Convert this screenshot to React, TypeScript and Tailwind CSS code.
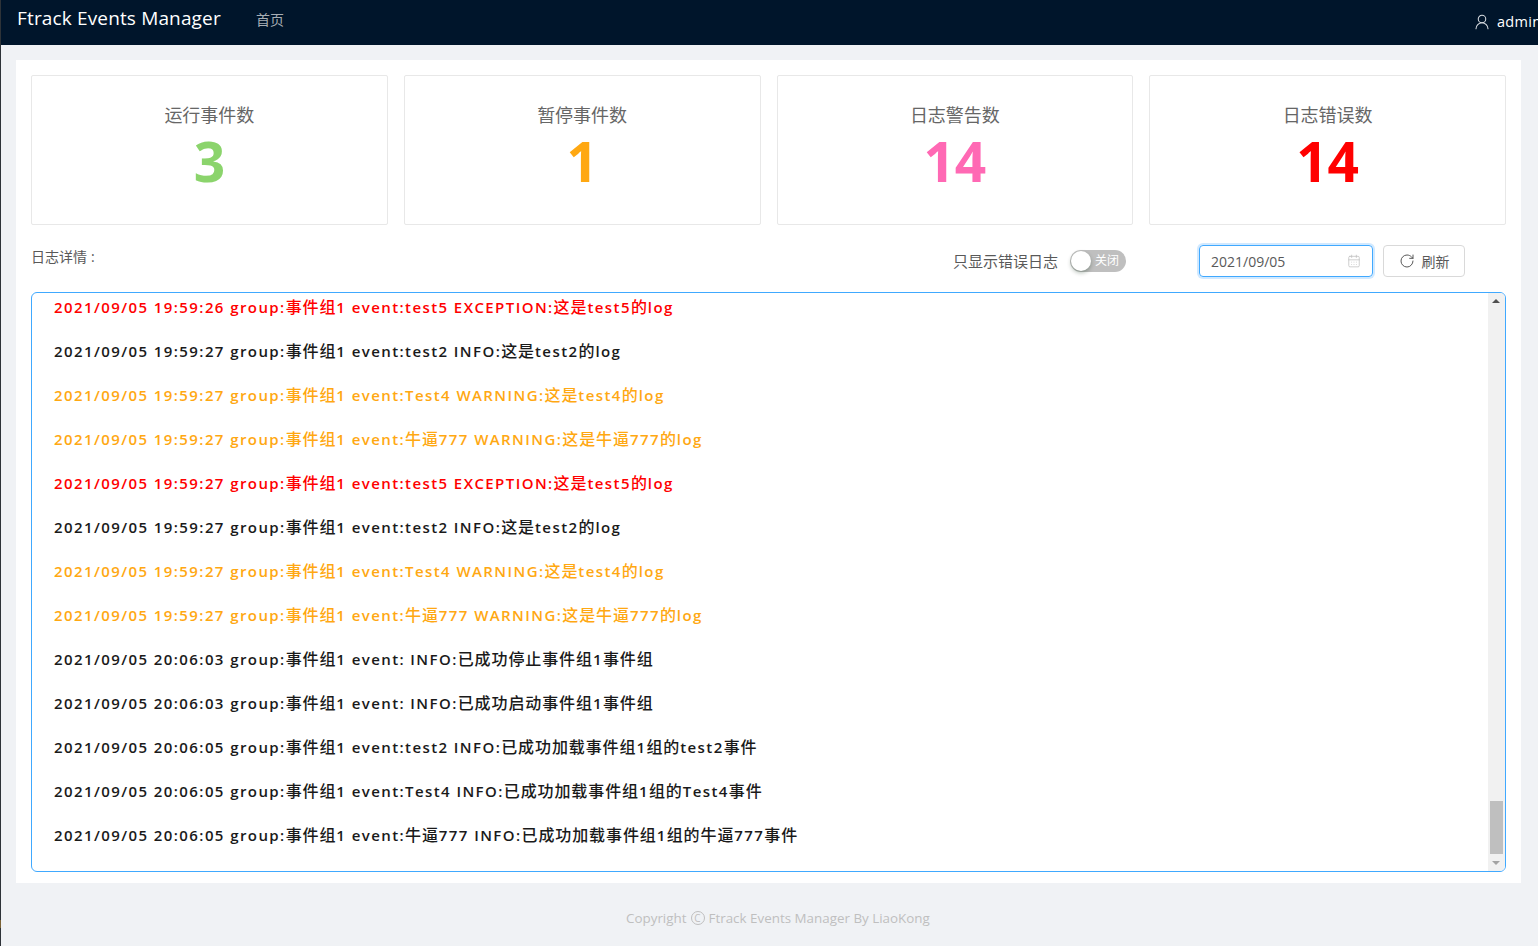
import { CalendarDays, RotateCw, UserRound } from "lucide-react";

const FONT = "font-['Open_Sans','Noto_Sans_CJK_SC',sans-serif]";
const RED = "text-[#ff0000]";
const ORANGE = "text-[#ffa812]";
const BLACK = "text-[#1a1a1a]";

const logs: [string, string][] = [
  [RED, "2021/09/05 19:59:26 group:事件组1 event:test5 EXCEPTION:这是test5的log"],
  [BLACK, "2021/09/05 19:59:27 group:事件组1 event:test2 INFO:这是test2的log"],
  [ORANGE, "2021/09/05 19:59:27 group:事件组1 event:Test4 WARNING:这是test4的log"],
  [ORANGE, "2021/09/05 19:59:27 group:事件组1 event:牛逼777 WARNING:这是牛逼777的log"],
  [RED, "2021/09/05 19:59:27 group:事件组1 event:test5 EXCEPTION:这是test5的log"],
  [BLACK, "2021/09/05 19:59:27 group:事件组1 event:test2 INFO:这是test2的log"],
  [ORANGE, "2021/09/05 19:59:27 group:事件组1 event:Test4 WARNING:这是test4的log"],
  [ORANGE, "2021/09/05 19:59:27 group:事件组1 event:牛逼777 WARNING:这是牛逼777的log"],
  [BLACK, "2021/09/05 20:06:03 group:事件组1 event: INFO:已成功停止事件组1事件组"],
  [BLACK, "2021/09/05 20:06:03 group:事件组1 event: INFO:已成功启动事件组1事件组"],
  [BLACK, "2021/09/05 20:06:05 group:事件组1 event:test2 INFO:已成功加载事件组1组的test2事件"],
  [BLACK, "2021/09/05 20:06:05 group:事件组1 event:Test4 INFO:已成功加载事件组1组的Test4事件"],
  [BLACK, "2021/09/05 20:06:05 group:事件组1 event:牛逼777 INFO:已成功加载事件组1组的牛逼777事件"],
];

const stats: [string, string, string][] = [
  ["运行事件数", "3", "text-[#8bd46c]"],
  ["暂停事件数", "1", "text-[#ffa812]"],
  ["日志警告数", "14", "text-[#ff69b4]"],
  ["日志错误数", "14", "text-[#ff0000]"],
];

function LogText({ text }: { text: string }) {
  return (
    <>
      {text.split(/([\u4e00-\u9fff]+)/).map((part, i) =>
        i % 2 === 1 ? (
          <span key={i} className="text-[16px] font-medium tracking-[0.9px]">
            {part}
          </span>
        ) : (
          <span key={i}>{part}</span>
        )
      )}
    </>
  );
}

export default function App() {
  return (
    <div className={`${FONT} h-[946px] w-[1538px] overflow-hidden bg-[#f0f2f5] flex`}>
      <div className="w-[1px] shrink-0 flex flex-col bg-[#2e3338]">
        <div className="h-[920px] shrink-0" />
        <div className="h-[8px] shrink-0 bg-[#7a6236]" />
      </div>
      <div className="w-[1537px] shrink-0 flex flex-col">
        <header className="h-[45px] shrink-0 bg-[#00152b] flex items-center pl-4 text-white overflow-hidden">
          <div className="text-[19px] leading-[36px] -mt-[9px] w-[239px] tracking-[0.15px] whitespace-nowrap">Ftrack Events Manager</div>
          <div className="text-[14px] -mt-[6px] text-[#a6adb4]">首页</div>
          <div className="ml-auto flex items-center text-[14.5px] tracking-[0.3px] gap-[6px] -mr-[1px] -mt-[1px] w-[66px] whitespace-nowrap shrink-0">
            <UserRound size={18} strokeWidth={1.4} className="text-[#d7dce1] shrink-0" />
            <span>admin</span>
          </div>
        </header>

        <main className="ml-[15px] mr-[17px] mt-[15px] h-[823px] bg-white p-[15px] shrink-0 flex flex-col">
          <div className="grid grid-cols-4 gap-4 h-[150px] shrink-0">
            {stats.map(([label, value, color]) => (
              <div key={label} className="border border-[#e8e8e8] rounded-[2px] flex flex-col items-center pt-[25px]">
                <div className="text-[18px] leading-[28px] text-[#666666]">{label}</div>
                <div className={`text-[55px] leading-[64px] font-bold ${color}`}>{value}</div>
              </div>
            ))}
          </div>

          <div className="h-[67px] shrink-0 flex items-start text-[14px] text-[#595959]">
            <div className="mt-[21px] leading-[22px] w-[922px]">
              日志详情<span className="ml-[4px]">:</span>
            </div>
            <div className="mt-[25px] leading-[22px] w-[117px] text-[15px]">只显示错误日志</div>
            <div className="mt-[25px] w-[56px] h-[22px] rounded-full bg-[#bfbfbf] relative flex items-center justify-end pr-[7px] text-[12px] text-white">
              <span className="absolute left-[1px] top-[1px] h-[20px] w-[20px] rounded-full bg-white shadow-[0_2px_4px_rgba(0,35,11,0.3)]" />
              关闭
            </div>
            <div className="ml-[73px] mt-[20px] w-[174px] h-[32px] rounded-[4px] border border-[#40a9ff] shadow-[0_0_0_2px_rgba(24,144,255,0.2)] flex items-center pl-[11px] pr-[11px] justify-between text-[#595959]">
              <span>2021/09/05</span>
              <CalendarDays size={14} strokeWidth={1.3} className="text-[#bfbfbf]" />
            </div>
            <div className="ml-[10px] mt-[20px] w-[82px] h-[32px] rounded-[4px] border border-[#d9d9d9] flex items-center justify-center gap-[7px] text-[#595959]">
              <RotateCw size={16} strokeWidth={1.5} />
              <span>刷新</span>
            </div>
          </div>

          <div className="relative h-[580px] shrink-0 rounded-[6px] border border-[#40a9ff] overflow-hidden">
            <div className="-mt-[8px] pl-[22px] flex flex-col">
              {logs.map(([color, text], i) => (
                <div key={i} className={`h-[44px] leading-[44px] text-[15px] font-semibold tracking-[1.42px] whitespace-nowrap ${color}`}>
                  <LogText text={text} />
                </div>
              ))}
            </div>
            <div className="absolute right-0 top-0 bottom-0 w-[17px] bg-[#f1f1f1]">
              <div className="absolute left-[2px] right-[2px] bottom-[17px] h-[53px] bg-[#bfbfbf]" />
              <div className="absolute left-[4px] top-[6px] h-0 w-0 border-x-[4px] border-x-transparent border-b-[4px] border-b-[#505050]" />
              <div className="absolute left-[4px] bottom-[6px] h-0 w-0 border-x-[4px] border-x-transparent border-t-[4px] border-t-[#a3a3a3]" />
            </div>
          </div>
        </main>

        <footer className="h-[63px] flex items-center pt-[7px] pl-[625px] text-[13.4px] text-[#bfbfbf] whitespace-nowrap gap-[4px]">
          <span>Copyright</span>
          <span className="inline-flex h-[14px] w-[14px] items-center justify-center rounded-full border border-[#bfbfbf] text-[10px] leading-none">C</span>
          <span>Ftrack Events Manager By LiaoKong</span>
        </footer>
      </div>
    </div>
  );
}
